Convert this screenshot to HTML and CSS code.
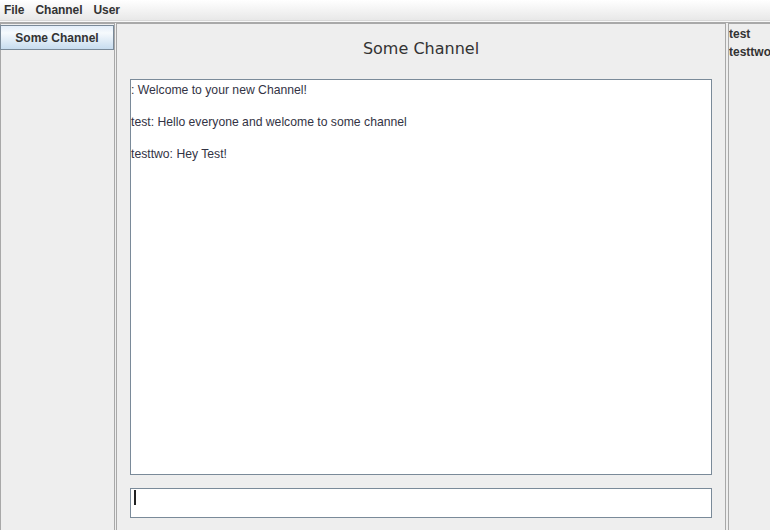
FILE: index.html
```html
<!DOCTYPE html>
<html>
<head>
<meta charset="utf-8">
<link rel="stylesheet" href="styles.css">
</head>
<body>
<div class="menubar">
  <span class="menu">File</span>
  <span class="menu">Channel</span>
  <span class="menu">User</span>
</div>
<div class="main">
  <div class="panel left">
    <div class="chbtn">Some Channel</div>
  </div>
  <div class="panel center">
    <div class="title">Some Channel</div>
    <div class="chat">
      <p>: Welcome to your new Channel!</p>
      <p>test: Hello everyone and welcome to some channel</p>
      <p>testtwo: Hey Test!</p>
    </div>
    <div class="input"><span class="caret"></span></div>
  </div>
  <div class="panel right">
    <div class="user">test</div>
    <div class="user">testtwo</div>
  </div>
</div>
</body>
</html>
```
FILE: styles.css
```css
html, body {
  margin: 0;
  padding: 0;
  width: 770px;
  height: 530px;
  overflow: hidden;
  background: #eeeeee;
  font-family: "Liberation Sans", Arial, sans-serif;
}
.menubar {
  height: 20px;
  display: flex;
  align-items: center;
  padding-left: 4px;
  background: linear-gradient(#ffffff, #e8e8e8);
  border-bottom: 1px solid #d8d8d8;
  box-shadow: 0 1px 0 #f8f8f8, 0 2px 0 #a9a9a9;
  margin-bottom: 2px;
}
.menu {
  font-size: 12px;
  font-weight: bold;
  color: #333333;
  margin-right: 11px;
  letter-spacing: -0.05px;
}
.main {
  display: flex;
  height: 507px;
}
.panel {
  border: 1px solid #a8a8a8;
  border-bottom: none;
  box-sizing: border-box;
  height: 100%;
}
.left {
  width: 115px;
  margin-right: 1px;
}
.chbtn {
  height: 25px;
  width: 114px;
  margin-left: -1px;
  margin-top: 1px;
  box-sizing: border-box;
  border: 1px solid #7a8a99;
  background: linear-gradient(#e3eef9 0%, #f6fafd 30%, #c7dcef 100%);
  font-size: 12px;
  font-weight: bold;
  color: #333333;
  display: flex;
  align-items: center;
  justify-content: center;
}
.center {
  width: 610px;
  margin-right: 2px;
  display: flex;
  flex-direction: column;
  padding: 0 13px 0 13px;
}
.title {
  font-family: "DejaVu Sans", sans-serif;
  font-size: 16px;
  color: #333333;
  text-align: center;
  height: 55px;
  line-height: 50px;
}
.chat {
  height: 396px;
  background: #ffffff;
  border: 1px solid #7a8a99;
  box-sizing: border-box;
  font-size: 12.2px;
  color: #333344;
  padding-top: 3px;
}
.chat p {
  margin: 0 0 18px 0;
  line-height: 14px;
}
.input {
  margin-top: 13px;
  height: 30px;
  background: #ffffff;
  border: 1px solid #7a8a99;
  box-sizing: border-box;
  padding: 1px 0 0 3px;
}
.caret {
  display: block;
  width: 2px;
  height: 15px;
  background: #222222;
}
.right {
  flex: 1;
  border-right: none;
  padding-left: 0;
  overflow: hidden;
  padding-top: 1px;
}
.user {
  font-size: 12px;
  font-weight: bold;
  color: #333333;
  line-height: 18px;
  white-space: nowrap;
}
```
